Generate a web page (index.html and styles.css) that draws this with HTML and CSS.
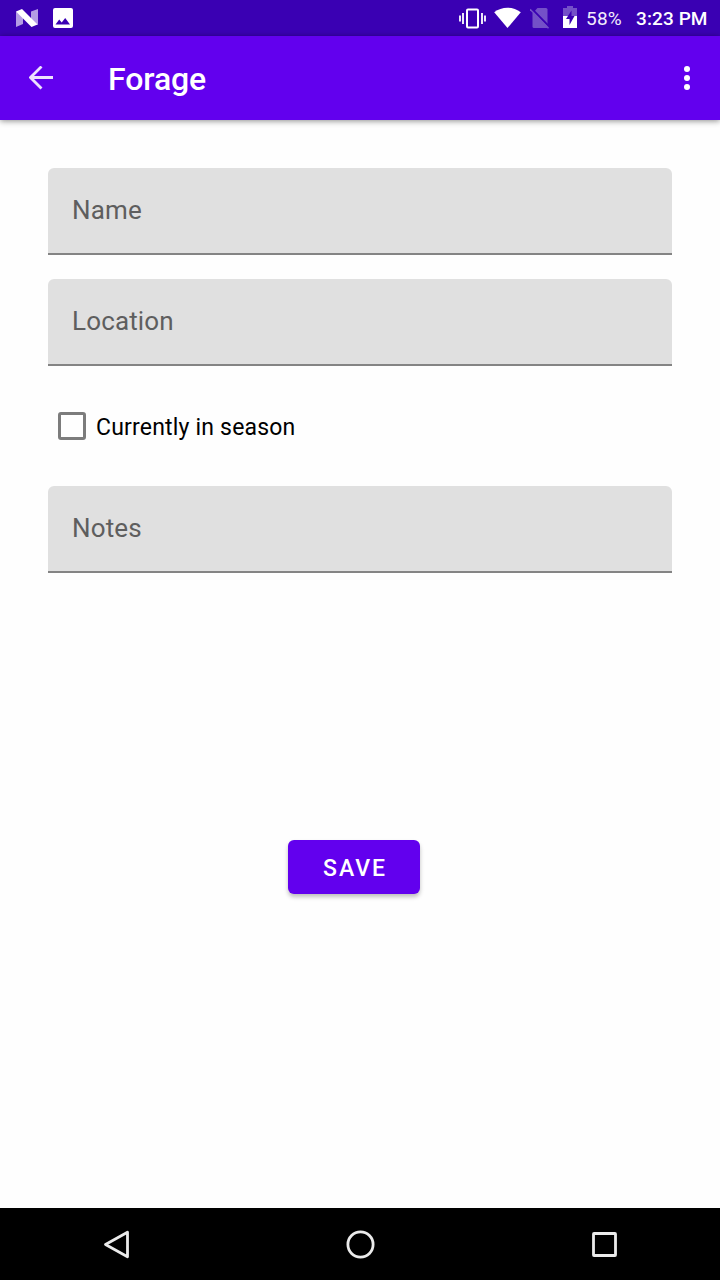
FILE: index.html
```html
<!DOCTYPE html>
<html lang="en">
<head>
<meta charset="utf-8">
<title>Forage</title>
<link rel="stylesheet" href="styles.css">
</head>
<body>
<div class="screen">
  <div class="status-bar">
    <div class="notifications">
      <svg width="22" height="18" viewBox="0 0 22 18"><path fill="#b49ce4" d="M0 2.500l7 4v8.500l-7 3zM15 2.500l7-2.500v16l-7-4z"/><path fill="#fff" d="M0 2.500L6 0l15.500 15.500-6 2.500z"/></svg>
      <svg width="20" height="20" viewBox="0 0 20 20"><path fill="#fff" fill-rule="evenodd" d="M2 0h16a2 2 0 0 1 2 2v16a2 2 0 0 1-2 2H2a2 2 0 0 1-2-2V2a2 2 0 0 1 2-2zM2.500 16.500h14.500L12.200 10l-3.500 4.500-2.500-3z"/></svg>
    </div>
    <div class="system">
      <svg class="vibrate" width="28" height="22" viewBox="0 0 28 22"><rect x="8" y="2.500" width="11" height="18" rx="1" fill="none" stroke="#fff" stroke-width="2"/><path stroke="#fff" stroke-width="1.800" d="M1 8.500v6M4 6v11M23 6v11M26 8.500v6"/></svg>
      <svg class="wifi" width="28" height="22" viewBox="0 0 28 22"><path fill="#fff" d="M.2 5.200C7.500-.9 19.500-.9 26.800 5.200L13.500 21z"/></svg>
      <svg class="sim" width="20" height="21" viewBox="0 0 20 21"><path fill="#7450c8" d="M2.500 5.500L7.500 0H16a1.500 1.500 0 0 1 1.500 1.500V20H4a1.500 1.500 0 0 1-1.500-1.500z"/><path stroke="#3a00b3" stroke-width="2" d="M1 0l19 19.500"/><path stroke="#7450c8" stroke-width="1.600" d="M0 1.200l18.500 19"/></svg>
      <svg class="battery" width="14" height="22" viewBox="0 0 14 22"><path fill="#7450c8" d="M0 2h4V0h6v2h4v8H0z"/><path fill="#fff" d="M0 10h14v12H0z"/><path fill="#3a00b3" d="M8.500 4.500L3 13h3.500v6L11.500 10H8.500z"/></svg>
      <span class="charge">58%</span>
      <span class="clock">3:23 PM</span>
    </div>
  </div>
  <header class="app-bar">
    <svg class="back" width="24" height="24" viewBox="0 0 24 24"><path fill="none" stroke="#ece2fd" stroke-width="3" d="M24 11.500H2"/><path fill="none" stroke="#ece2fd" stroke-width="2.800" d="M12.500.5L1.500 11.500l11 11"/></svg>
    <h1 class="title">Forage</h1>
    <svg class="more" width="6" height="24" viewBox="0 0 6 24"><g fill="#fff"><circle cx="3" cy="3" r="3"/><circle cx="3" cy="12" r="3"/><circle cx="3" cy="21" r="3"/></g></svg>
  </header>
  <main class="form">
    <div class="field">Name</div>
    <div class="field">Location</div>
    <div class="check"><span class="box"></span><span class="check-label">Currently in season</span></div>
    <div class="field">Notes</div>
    <button class="save">SAVE</button>
  </main>
  <nav class="nav-bar">
    <svg width="28" height="30" viewBox="0 0 28 30"><path fill="none" stroke="#ebebeb" stroke-width="2.800" stroke-linejoin="round" d="M24.500 2.200v24.600L2.500 14.500z"/></svg>
    <svg width="30" height="30" viewBox="0 0 30 30"><circle cx="14.500" cy="14.500" r="12.600" fill="none" stroke="#ebebeb" stroke-width="2.800"/></svg>
    <svg width="26" height="26" viewBox="0 0 26 26"><rect x="2.500" y="1.500" width="22" height="22" rx=".5" fill="none" stroke="#ebebeb" stroke-width="2.800"/></svg>
  </nav>
</div>
</body>
</html>
```
FILE: styles.css
```css
* { box-sizing: border-box; }
body { margin: 0; font-family: Roboto, sans-serif; background: #fefefe; }
svg { display: block; flex: none; }
.screen { width: 720px; height: 1280px; display: flex; flex-direction: column; }
.status-bar { height: 36px; flex: none; background: #3a00b3; display: flex; justify-content: space-between; padding: 0 12px 0 16px; color: #fff; }
.notifications, .system { display: flex; align-items: center; }
.notifications { gap: 15px; }
.system { white-space: nowrap; line-height: 36px; }
.vibrate { margin-right: 7px; }
.wifi { margin-right: 8px; }
.sim { margin-right: 13px; }
.battery { margin: 0 9px 2px 0; }
.charge { width: 50px; font-size: 19px; letter-spacing: .2px; color: #f2ecfc; padding-top: 1px; }
.clock { width: 72px; font-size: 19px; font-weight: 500; letter-spacing: .1px; padding-top: 1px; }
.app-bar { height: 84px; flex: none; background: #6200ee; display: flex; align-items: center; padding: 0 30px 0 29px; box-shadow: 0 1px 6px rgba(0,0,0,.45); }
.title { margin: 2px auto 0 55px; font-size: 32px; font-weight: 500; letter-spacing: -.1px; color: #fff; }
.form { flex: 1; display: flex; flex-direction: column; padding: 48px 48px 0; }
.field { height: 87px; flex: none; background: #e0e0e0; border-bottom: 2px solid #848484; border-radius: 6px 6px 0 0; padding: 0 24px; font-size: 26px; line-height: 84px; letter-spacing: .15px; color: #5e5e5e; }
.field + .field { margin-top: 24px; }
.check { height: 72px; margin: 24px 0; padding-left: 10px; display: flex; align-items: center; gap: 10px; }
.box { width: 28px; height: 28px; border: 3px solid #7c7c7c; border-radius: 3px; }
.check-label { font-size: 23px; letter-spacing: .19px; padding-top: 2px; color: #000; }
.save { align-self: flex-start; width: 132px; height: 54px; margin: 267px 0 0 240px; padding: 3px 0 0 2px; border: 0; border-radius: 6px; background: #6200ee; color: #fff; font: 500 23px Roboto, sans-serif; letter-spacing: 2px; box-shadow: 0 3px 4px rgba(0,0,0,.25); }
.nav-bar { height: 72px; flex: none; background: #000; display: flex; align-items: center; justify-content: space-between; padding: 1px 103px 0 103px; }
```
